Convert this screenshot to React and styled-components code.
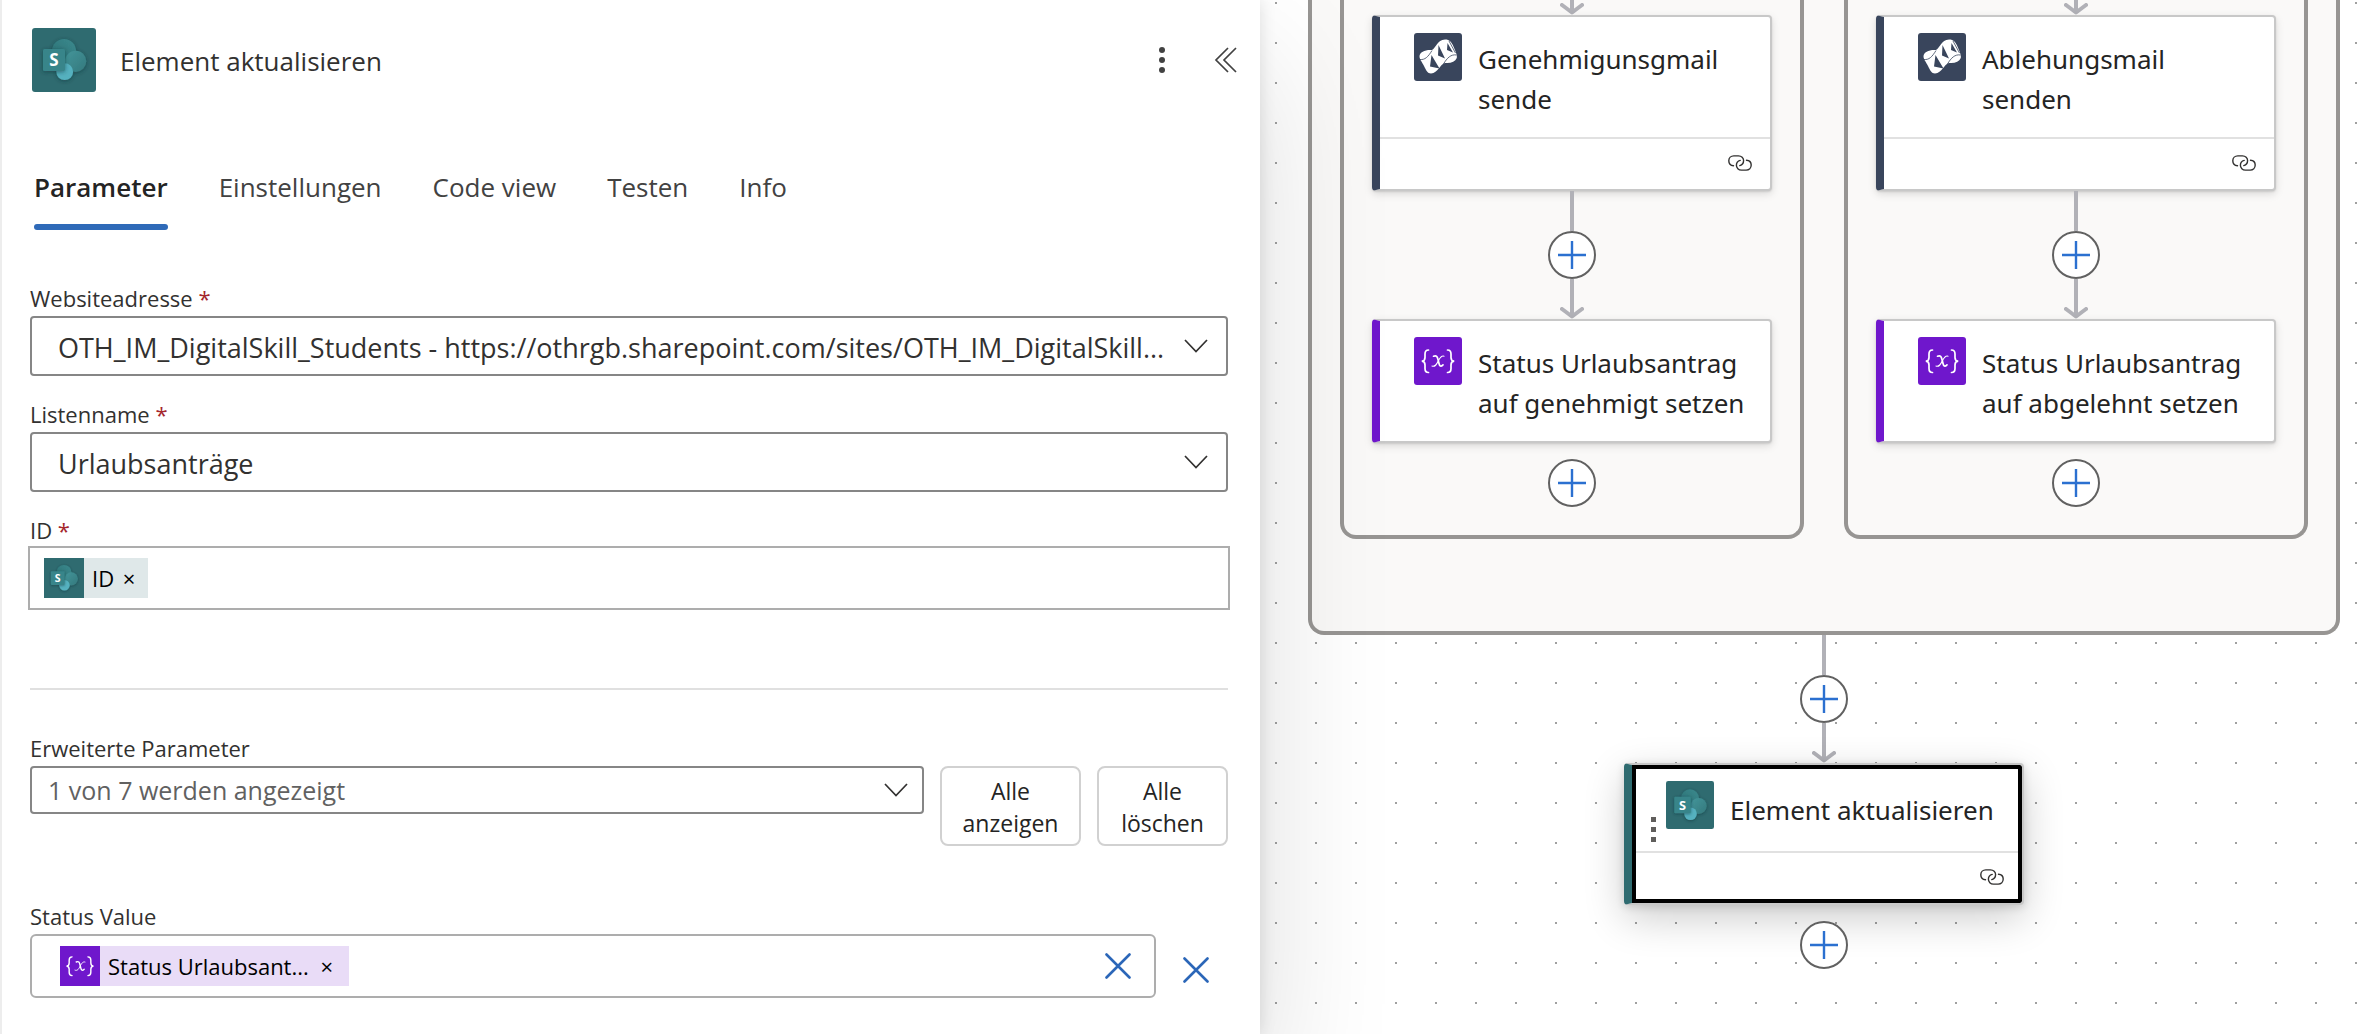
import React from "react";
import styled, { createGlobalStyle, css } from "styled-components";

const Global = createGlobalStyle`
  *, *::before, *::after { box-sizing: border-box; }
  body {
    margin: 0;
    background: #fff;
    font-family: "Open Sans", "Noto Sans", sans-serif;
    color: #323130;
  }
  button, input, select { font-family: inherit; color: inherit; margin: 0; }
  svg { display: block; flex: none; }
`;

const Page = styled.div`
  display: grid;
  grid-template-columns: minmax(0, 42fr) minmax(0, 37fr);
  min-height: 100vh;
  overflow: hidden;
`;

/* ---------- side panel ---------- */

const Panel = styled.aside`
  position: relative;
  z-index: 1;
  background: #fff;
  border-left: 2px solid #ededed;
  padding: 28px 32px 36px 28px;
  box-shadow: 0 0 16px rgba(0, 0, 0, 0.12), 0 64px 128px rgba(0, 0, 0, 0.14);
`;

const PanelHeader = styled.header`
  display: flex;
  align-items: center;
  padding-left: 2px;
`;

const PanelTitle = styled.h1`
  flex: 1;
  margin: 0;
  padding: 2px 0 0 24px;
  font-size: 26px;
  line-height: 40px;
  font-weight: 400;
`;

const IconButton = styled.button`
  display: grid;
  place-items: center;
  flex: none;
  width: ${(p) => p.$size || 32}px;
  height: ${(p) => p.$size || 32}px;
  padding: 0;
  border: 0;
  background: none;
`;

const HeaderActions = styled.div`
  display: flex;
  gap: 32px;
  margin-right: -14px;
`;

const TabList = styled.div`
  display: flex;
  gap: 51px;
  margin-top: 75px;
  padding-left: 4px;
`;

const Tab = styled.button`
  padding: 0;
  border: 0;
  background: none;
  font-size: 26px;
  line-height: 40px;
  color: ${(p) => (p.$active ? "#242424" : "#424242")};
  font-weight: ${(p) => (p.$active ? 600 : 400)};
  &::after {
    content: "";
    display: block;
    height: 6px;
    margin-top: 17px;
    border-radius: 3px;
    background: ${(p) => (p.$active ? "#2f6ab8" : "transparent")};
  }
`;

const Form = styled.form`
  display: flex;
  flex-direction: column;
  gap: 20px;
  margin-top: 50px;
`;

const Field = styled.div`
  display: flex;
  flex-direction: column;
  flex: 1;
  min-width: 0;
`;

const Label = styled.label`
  font-size: 22px;
  line-height: 36px;
`;

const Required = styled.span`
  color: #a4262c;
`;

const SelectWrap = styled.div`
  display: grid;
  align-items: center;
  & > * { grid-area: 1 / 1; }
  & > svg {
    justify-self: end;
    margin-right: ${(p) => (p.$compact ? 16 : 20)}px;
    pointer-events: none;
  }
`;

const Select = styled.select`
  appearance: none;
  width: 100%;
  height: ${(p) => (p.$compact ? 48 : 60)}px;
  padding: ${(p) => (p.$compact ? "0 60px 0 16px" : "3px 56px 0 26px")};
  border: 2px solid #868686;
  border-radius: 4px;
  background: #fff;
  font-size: ${(p) => (p.$compact ? 25 : 27)}px;
  color: ${(p) => (p.$compact ? "#616161" : "#323130")};
`;

const TokenBox = styled.div`
  display: flex;
  align-items: center;
  min-width: 0;
  height: 64px;
  border: 2px solid #adadad;
  ${(p) =>
    p.$rounded
      ? css`flex: 1; border-radius: 6px; padding: 0 20px 0 28px;`
      : css`margin: -2px; padding: 0 14px;`}
`;

const Token = styled.span`
  display: flex;
  align-items: center;
  height: 40px;
  padding-right: 4px;
  background: ${(p) => p.$bg};
  color: #000;
  font-size: 22px;
  line-height: 40px;
  white-space: nowrap;
`;

const TokenText = styled.span`
  padding-left: 8px;
`;

const TokenRemove = styled.button`
  padding: 0;
  width: ${(p) => p.$width}px;
  border: 0;
  background: none;
  font-size: 22px;
  line-height: 40px;
  color: #000;
`;

const TokenInput = styled.input`
  flex: 1;
  min-width: 0;
  padding: 0 8px;
  border: 0;
  outline: 0;
  background: none;
  font-size: 22px;
`;

const Divider = styled.hr`
  width: 100%;
  height: 2px;
  margin: 60px 0 20px;
  border: 0;
  background: #e0e0e0;
`;

const AdvancedRow = styled.div`
  display: flex;
  align-items: flex-start;
  margin-bottom: 32px;
`;

const AdvancedButtons = styled.div`
  display: grid;
  grid-template-columns: 141px 131px;
  gap: 16px;
  margin: 36px 0 0 16px;
`;

const OutlineButton = styled.button`
  height: 80px;
  padding: 2px 0 0;
  border: 2px solid #d1d1d1;
  border-radius: 8px;
  background: #fff;
  color: #242424;
  font-size: 23px;
  line-height: 32px;
`;

const ValueRow = styled.div`
  display: flex;
  align-items: flex-end;
  gap: 12px;
  padding-right: 4px;
`;

/* ---------- flow canvas ---------- */

const Canvas = styled.main`
  display: flex;
  flex-direction: column;
  align-items: center;
  padding-left: 18px;
  background-color: #fff;
  background-image: conic-gradient(from 270deg at 2px 2px, #a0a0a0 90deg, transparent 0);
  background-size: 40px 40px;
  background-position: 15px 2px;
`;

const Scope = styled.section`
  display: flex;
  align-items: flex-start;
  gap: 40px;
  padding: 0 28px 92px;
  border: 4px solid #979593;
  border-top: 0;
  border-radius: 0 0 16px 16px;
  background: #faf9f8;
`;

const Branch = styled.section`
  display: flex;
  flex-direction: column;
  align-items: center;
  padding: 0 28px 28px;
  border: 4px solid #979593;
  border-top: 0;
  border-radius: 0 0 16px 16px;
  background: #faf9f8;
`;

const Card = styled.article`
  width: 400px;
  border: 2px solid #c8c8c8;
  border-left: 8px solid ${(p) => p.$accent};
  border-radius: 4px;
  background: #fff;
  box-shadow: 0 3px 8px rgba(0, 0, 0, 0.13), 0 1px 2px rgba(0, 0, 0, 0.11);
  ${(p) =>
    p.$selected &&
    css`
      box-shadow: inset 0 0 0 4px #000, 0 13px 40px rgba(0, 0, 0, 0.2),
        0 2px 8px rgba(0, 0, 0, 0.14);
    `}
`;

const CardHeader = styled.div`
  display: flex;
  align-items: center;
  min-height: 86px;
  padding: 0 14px 0 ${(p) => (p.$selected ? 19 : 34)}px;
  & > svg {
    align-self: flex-start;
    margin-top: 16px;
  }
`;

const CardTitle = styled.h2`
  margin: 0;
  padding: 22px 0 18px 16px;
  font-family: "Noto Sans", sans-serif;
  font-size: 26px;
  line-height: 40px;
  font-weight: 400;
  color: #242424;
`;

const CardFooter = styled.div`
  display: flex;
  justify-content: flex-end;
  align-items: center;
  height: 52px;
  margin: 0 ${(p) => (p.$selected ? 4 : 0)}px;
  padding: 0 ${(p) => (p.$selected ? 14 : 18)}px 2px;
  border-top: 2px solid #e1e1e1;
`;

const DragHandle = styled.span`
  display: grid;
  align-self: flex-start;
  gap: 5px;
  width: 5px;
  margin: 52px 10px 0 0;
  & > i { height: 5px; background: #605e5c; }
`;

const Stem = styled.div`
  width: 4px;
  height: ${(p) => p.$height}px;
  background: #b1b1b7;
`;

const ArrowStem = styled.div`
  display: flex;
  flex-direction: column;
  justify-content: flex-end;
  align-items: center;
  height: ${(p) => p.$height}px;
`;

const AddButton = styled.button`
  display: grid;
  place-items: center;
  width: 48px;
  height: 48px;
  margin-top: ${(p) => (p.$spaced ? 16 : 0)}px;
  padding: 0;
  border: 2px solid #616161;
  border-radius: 50%;
  background: #fff;
`;

/* ---------- drawings ---------- */

function SharePointIcon({ size, radius = 3 }) {
  return (
    <svg width={size} height={size} viewBox="0 0 64 64" aria-hidden="true">
      <defs>
        <linearGradient id="sp-top" x1="0" y1="1" x2="1" y2="0">
          <stop offset="0" stopColor="#2b6f73" />
          <stop offset="1" stopColor="#3b8a8e" />
        </linearGradient>
        <linearGradient id="sp-right" x1="0" y1="0" x2="1" y2="1">
          <stop offset="0" stopColor="#43959a" />
          <stop offset="1" stopColor="#34797d" />
        </linearGradient>
        <filter id="sp-shadow" x="-30%" y="-30%" width="160%" height="160%">
          <feDropShadow dx="0" dy="1" stdDeviation="2" floodColor="#0b3336" floodOpacity="0.55" />
        </filter>
      </defs>
      <rect width="64" height="64" rx={radius} fill="#2f6b70" />
      <g filter="url(#sp-shadow)">
        <circle cx="32" cy="23" r="12" fill="url(#sp-top)" />
        <circle cx="43.7" cy="33.3" r="10.6" fill="url(#sp-right)" />
        <circle cx="32.7" cy="43.7" r="8.4" fill="#55b1bf" />
      </g>
      <rect x="11" y="21" width="22" height="22" rx="1.5" fill="#37858a" filter="url(#sp-shadow)" />
      <text x="22" y="38" textAnchor="middle" fontFamily="Open Sans, sans-serif" fontWeight="700" fontSize="17" fill="#fff">
        S
      </text>
    </svg>
  );
}

function MailIcon() {
  return (
    <svg width="48" height="48" viewBox="0 0 48 48" aria-hidden="true">
      <rect width="48" height="48" rx="3" fill="#39455c" />
      <path
        d="M5.5 23C6 19 11 16.5 18 17C22 15 23 7 31 6.500C35 6.300 37.500 9 39 12.500C41 17 43.500 22 42.800 25C41 29 37 30.500 31 30C26 31 24 40 17 40.500C13.500 40.500 12 37 10 33C8 29 5.300 26 5.500 23Z"
        fill="#fff"
      />
      <path d="M24.500 12L31 25.500L24 22.500Z M17.500 22L16 33.500L25.500 35.500Z M33.500 10L33 17L39 19.500Z" fill="#39455c" />
      <path d="M6 26.500C11 27 14 24 18 17.500M42.500 22C37 21 33 25 29.500 31M35 8L41.500 20" fill="none" stroke="#39455c" strokeWidth="0.8" />
    </svg>
  );
}

function VariableIcon({ size, radius = 3 }) {
  return (
    <svg width={size} height={size} viewBox="0 0 48 48" aria-hidden="true">
      <rect width="48" height="48" rx={radius} fill="#6f17cc" />
      <g fill="none" stroke="#fff" strokeWidth="1.700" strokeLinecap="round">
        <path d="M14.500 13C11.500 13 11 14.500 11 17V20.500C11 23 10 24 7.800 24.200C10 24.400 11 25.400 11 28V31.500C11 34 11.500 35.500 14.500 35.500" />
        <path d="M33.500 13C36.500 13 37 14.500 37 17V20.500C37 23 38 24 40.200 24.200C38 24.400 37 25.400 37 28V31.500C37 34 36.500 35.500 33.500 35.500" />
        <path d="M19.500 19.200C22.500 18 23.300 19.500 24 22.500L25 26.500C25.600 29.300 26.800 30 29 27.800" />
        <path d="M30 19.200C27.500 18.300 25.800 21 24.300 24C22.500 27.500 21 30.300 18 29" strokeWidth="1.100" />
      </g>
    </svg>
  );
}

const ChevronDown = () => (
  <svg width="24" height="14" viewBox="0 0 24 14" aria-hidden="true">
    <path d="M1 1L12 12.500L23 1" fill="none" stroke="#323130" strokeWidth="1.700" />
  </svg>
);

const CollapseIcon = () => (
  <svg width="24" height="26" viewBox="0 0 24 26" aria-hidden="true">
    <path d="M14 1L2 13L14 25M22 1L10 13L22 25" fill="none" stroke="#424242" strokeWidth="1.700" />
  </svg>
);

const MoreIcon = () => (
  <svg width="6" height="26" viewBox="0 0 6 26" aria-hidden="true" fill="#424242">
    <circle cx="3" cy="3" r="3" />
    <circle cx="3" cy="13" r="3" />
    <circle cx="3" cy="23" r="3" />
  </svg>
);

const CrossIcon = () => (
  <svg width="26" height="26" viewBox="0 0 26 26" aria-hidden="true">
    <path d="M1.500 1.500L24.500 24.500M24.500 1.500L1.500 24.500" stroke="#2b66b8" strokeWidth="2.600" strokeLinecap="round" />
  </svg>
);

const LinkIcon = () => (
  <svg width="24" height="16" viewBox="0 0 24 16" aria-hidden="true">
    <g fill="none" stroke="#323130" strokeWidth="1.400" strokeLinecap="round">
      <path d="M5.500 10.800C2.500 10.500 0.800 8.500 0.800 5.800C0.800 3 3 0.900 5.800 0.900H10.500C13.500 0.900 15.600 3 15.600 5.600C15.600 8 14 10 11.800 10.600" />
      <path d="M18.500 5.300C21.500 5.500 23.200 7.500 23.200 10.100C23.200 12.900 21 15.100 18.200 15.100H13.500C10.500 15.100 8.400 13 8.400 10.300C8.400 8 9.800 6 12.200 5.400" />
    </g>
  </svg>
);

const ArrowHead = () => (
  <svg width="24" height="12" viewBox="0 0 24 12" aria-hidden="true">
    <path d="M2 2L12 9.500L22 2" fill="none" stroke="#b1b1b7" strokeWidth="4" strokeLinecap="round" strokeLinejoin="round" />
    <path d="M12 0V9" stroke="#b1b1b7" strokeWidth="4" />
  </svg>
);

/* ---------- composed parts ---------- */

function Add({ spaced }) {
  return (
    <AddButton type="button" aria-label="Aktion einfügen" $spaced={spaced}>
      <svg width="28" height="28" viewBox="0 0 28 28" aria-hidden="true">
        <path d="M14 0V28M0 14H28" stroke="#2b70d0" strokeWidth="2.400" />
      </svg>
    </AddButton>
  );
}

function Arrow({ height }) {
  return (
    <ArrowStem $height={height}>
      <Stem $height={height - 12} />
      <ArrowHead />
    </ArrowStem>
  );
}

function ActionCard({ accent, icon, title, linked, selected }) {
  return (
    <Card $accent={accent} $selected={selected}>
      <CardHeader $selected={selected}>
        {selected && (
          <DragHandle aria-hidden="true">
            <i />
            <i />
            <i />
          </DragHandle>
        )}
        {icon}
        <CardTitle>{title}</CardTitle>
      </CardHeader>
      {linked && (
        <CardFooter $selected={selected}>
          <LinkIcon />
        </CardFooter>
      )}
    </Card>
  );
}

const branches = [
  { id: "yes", mail: "Genehmigunsgmail sende", status: "Status Urlaubsantrag auf genehmigt setzen" },
  { id: "no", mail: "Ablehungsmail senden", status: "Status Urlaubsantrag auf abgelehnt setzen" },
];

const tabs = ["Parameter", "Einstellungen", "Code view", "Testen", "Info"];

function SelectField({ id, label, value }) {
  return (
    <Field>
      <Label htmlFor={id}>
        {label} <Required>*</Required>
      </Label>
      <SelectWrap>
        <Select id={id} defaultValue={value}>
          <option>{value}</option>
        </Select>
        <ChevronDown />
      </SelectWrap>
    </Field>
  );
}

export default function App() {
  return (
    <>
      <Global />
      <Page>
        <Panel>
          <PanelHeader>
            <SharePointIcon size={64} />
            <PanelTitle>Element aktualisieren</PanelTitle>
            <HeaderActions>
              <IconButton type="button" aria-label="Weitere Optionen">
                <MoreIcon />
              </IconButton>
              <IconButton type="button" aria-label="Bereich einklappen">
                <CollapseIcon />
              </IconButton>
            </HeaderActions>
          </PanelHeader>
          <TabList role="tablist">
            {tabs.map((t, i) => (
              <Tab key={t} type="button" role="tab" aria-selected={i === 0} $active={i === 0}>
                {t}
              </Tab>
            ))}
          </TabList>
          <Form>
            <SelectField
              id="site"
              label="Websiteadresse"
              value="OTH_IM_DigitalSkill_Students - https://othrgb.sharepoint.com/sites/OTH_IM_DigitalSkill..."
            />
            <SelectField id="list" label="Listenname" value="Urlaubsanträge" />
            <Field>
              <Label htmlFor="item-id">
                ID <Required>*</Required>
              </Label>
              <TokenBox>
                <Token $bg="#dfe8e9">
                  <SharePointIcon size={40} radius={0} />
                  <TokenText>ID</TokenText>
                  <TokenRemove type="button" aria-label="ID entfernen" $width={30}>×</TokenRemove>
                </Token>
                <TokenInput id="item-id" />
              </TokenBox>
            </Field>
            <Divider />
            <AdvancedRow>
              <Field>
                <Label htmlFor="advanced">Erweiterte Parameter</Label>
                <SelectWrap $compact>
                  <Select id="advanced" $compact defaultValue="1 von 7 werden angezeigt">
                    <option>1 von 7 werden angezeigt</option>
                  </Select>
                  <ChevronDown />
                </SelectWrap>
              </Field>
              <AdvancedButtons>
                <OutlineButton type="button">Alle anzeigen</OutlineButton>
                <OutlineButton type="button">Alle löschen</OutlineButton>
              </AdvancedButtons>
            </AdvancedRow>
            <Field>
              <Label htmlFor="status">Status Value</Label>
              <ValueRow>
                <TokenBox $rounded>
                  <Token $bg="#e9dcf7">
                    <VariableIcon size={40} radius={0} />
                    <TokenText>Status Urlaubsant...</TokenText>
                    <TokenRemove type="button" aria-label="Status entfernen" $width={36}>×</TokenRemove>
                  </Token>
                  <TokenInput id="status" />
                  <IconButton type="button" aria-label="Wert leeren">
                    <CrossIcon />
                  </IconButton>
                </TokenBox>
                <IconButton type="button" aria-label="Parameter entfernen" $size={56}>
                  <CrossIcon />
                </IconButton>
              </ValueRow>
            </Field>
          </Form>
        </Panel>
        <Canvas>
          <Scope>
            {branches.map((b) => (
              <Branch key={b.id}>
                <Arrow height={15} />
                <ActionCard accent="#39455c" icon={<MailIcon />} title={b.mail} linked />
                <Stem $height={40} />
                <Add />
                <Arrow height={40} />
                <ActionCard accent="#6f17cc" icon={<VariableIcon size={48} />} title={b.status} />
                <Add spaced />
              </Branch>
            ))}
          </Scope>
          <Stem $height={40} />
          <Add />
          <Arrow height={40} />
          <ActionCard accent="#2f6b70" icon={<SharePointIcon size={48} />} title="Element aktualisieren" linked selected />
          <Add spaced />
        </Canvas>
      </Page>
    </>
  );
}
